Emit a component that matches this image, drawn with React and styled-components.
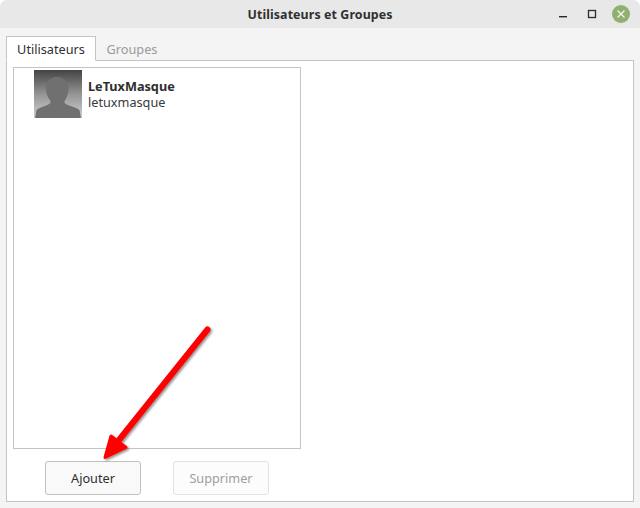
import React from "react";
import styled, { createGlobalStyle } from "styled-components";

const Global = createGlobalStyle`
  html, body { margin: 0; padding: 0; background: #ffffff; }
  #root { width: 640px; height: 508px; }
`;

const Window = styled.div`
  position: relative;
  width: 640px;
  height: 508px;
  display: flex;
  flex-direction: column;
  background: #f4f4f4;
  border-radius: 7px 7px 0 0;
  overflow: hidden;
  font-family: "Noto Sans", "DejaVu Sans", sans-serif;
  font-size: 12.7px;
  color: #2e2e2e;
`;

const TitleBar = styled.header`
  position: relative;
  height: 28px;
  flex: none;
  display: flex;
  align-items: center;
  justify-content: center;
  background: #e8e8e8;
`;

const Title = styled.h1`
  margin: 0;
  font-size: 12.4px;
  font-weight: 700;
  letter-spacing: 0.1px;
  color: #303030;
`;

const WindowControls = styled.div`
  position: absolute;
  right: 10px;
  top: 5px;
  display: flex;
  align-items: center;
  gap: 11px;
`;

const ControlIcon = styled.svg`
  display: block;
  width: ${(p) => p.$size}px;
  height: ${(p) => p.$size}px;
`;

const Content = styled.div`
  flex: 1;
  display: flex;
  flex-direction: column;
  padding: 8px 6px 6px;
  min-height: 0;
`;

const TabStrip = styled.div`
  display: flex;
  height: 25px;
  flex: none;
  margin-bottom: -1px;
  position: relative;
  z-index: 1;
`;

const Tab = styled.div`
  box-sizing: border-box;
  width: ${(p) => p.$width}px;
  display: flex;
  align-items: center;
  justify-content: center;
  padding-top: 1px;
  color: ${(p) => (p.$active ? "#303030" : "#9a9a9a")};
  background: ${(p) => (p.$active ? "#ffffff" : "transparent")};
  border: 1px solid ${(p) => (p.$active ? "#c4c4c4" : "transparent")};
  border-bottom-color: ${(p) => (p.$active ? "#ffffff" : "transparent")};
`;

const Panel = styled.div`
  box-sizing: border-box;
  flex: 1;
  min-height: 0;
  display: flex;
  flex-direction: column;
  align-items: flex-start;
  padding: 6px 6px 6px;
  background: #ffffff;
  border: 1px solid #c4c4c4;
`;

const UserList = styled.div`
  box-sizing: border-box;
  width: 288px;
  height: 382px;
  flex: none;
  background: #ffffff;
  border: 1px solid #c4c4c4;
  padding: 2px 0 0 20px;
`;

const UserRow = styled.div`
  display: flex;
  align-items: center;
  gap: 6px;
  height: 48px;
`;

const UserText = styled.div`
  display: flex;
  flex-direction: column;
  line-height: 16px;
`;

const UserName = styled.span`
  font-weight: 700;
  color: #2e2e2e;
`;

const UserLogin = styled.span`
  color: #3a3a3a;
`;

const Actions = styled.div`
  display: flex;
  gap: 32px;
  margin-top: 12px;
  padding-left: 32px;
`;

const Button = styled.button`
  box-sizing: border-box;
  width: 96px;
  height: 34px;
  padding: 0;
  border-radius: 3px;
  font: inherit;
  background: ${(p) => (p.disabled ? "#fcfcfc" : "#f9f9f9")};
  color: ${(p) => (p.disabled ? "#9e9e9e" : "#2e2e2e")};
  border: 1px solid ${(p) => (p.disabled ? "#e2e2e2" : "#c0c0c0")};
`;

const ArrowOverlay = styled.svg`
  position: absolute;
  left: 0;
  top: 0;
  width: 640px;
  height: 508px;
  pointer-events: none;
`;

const Avatar = () => (
  <svg width="48" height="48" viewBox="0 0 48 48" style={{ display: "block", flex: "none" }}>
    <defs>
      <linearGradient id="avatarBg" x1="0" y1="0" x2="0" y2="1">
        <stop offset="0" stopColor="#444444" />
        <stop offset="0.5" stopColor="#949494" />
        <stop offset="1" stopColor="#d0d0d0" />
      </linearGradient>
    </defs>
    <rect width="48" height="48" fill="url(#avatarBg)" />
    <path
      d="M23 7C15.500 7 12 12.500 12 19C12 24 14 28 16.500 31L16.500 33C13 36 6 37 2.500 40L1 48L47 48L45.500 40C42 37 34 36 30.500 33L30.500 31C32.500 28 34.500 24 34.500 19C34.500 12.500 30.500 7 23 7Z"
      fill="#707070"
    />
  </svg>
);

export default function App() {
  return (
    <Window>
      <Global />
      <TitleBar>
        <Title>Utilisateurs et Groupes</Title>
        <WindowControls>
          <ControlIcon $size={18} viewBox="0 0 18 18">
            <rect x="5" y="11" width="8" height="1.4" fill="#2a2a2a" />
          </ControlIcon>
          <ControlIcon $size={18} viewBox="0 0 18 18">
            <rect x="5.500" y="5.500" width="7" height="7" fill="none" stroke="#2a2a2a" strokeWidth="1.3" />
          </ControlIcon>
          <ControlIcon $size={18} viewBox="0 0 18 18">
            <circle cx="9" cy="9" r="9" fill="#8fb06f" />
            <path d="M5.500 5.500L12.500 12.500M12.500 5.500L5.500 12.500" stroke="#f2f2f2" strokeWidth="1.3" />
          </ControlIcon>
        </WindowControls>
      </TitleBar>
      <Content>
        <TabStrip>
          <Tab $active $width={90}>Utilisateurs</Tab>
          <Tab $width={72}>Groupes</Tab>
        </TabStrip>
        <Panel>
          <UserList>
            <UserRow>
              <Avatar />
              <UserText>
                <UserName>LeTuxMasque</UserName>
                <UserLogin>letuxmasque</UserLogin>
              </UserText>
            </UserRow>
          </UserList>
          <Actions>
            <Button>Ajouter</Button>
            <Button disabled>Supprimer</Button>
          </Actions>
        </Panel>
      </Content>
      <ArrowOverlay viewBox="0 0 640 508">
        <defs>
          <filter id="arrowShadow" x="-20%" y="-20%" width="140%" height="140%">
            <feDropShadow dx="1.5" dy="1.5" stdDeviation="1.2" floodColor="#000" floodOpacity="0.45" />
          </filter>
        </defs>
        <g filter="url(#arrowShadow)" fill="#fe0000" stroke="#fe0000" strokeLinecap="round" strokeLinejoin="round">
          <path d="M207.500 329.500L119 440" fill="none" strokeWidth="6" />
          <path d="M111 436L105 457.500L126 447.500Z" strokeWidth="3" />
        </g>
      </ArrowOverlay>
    </Window>
  );
}
